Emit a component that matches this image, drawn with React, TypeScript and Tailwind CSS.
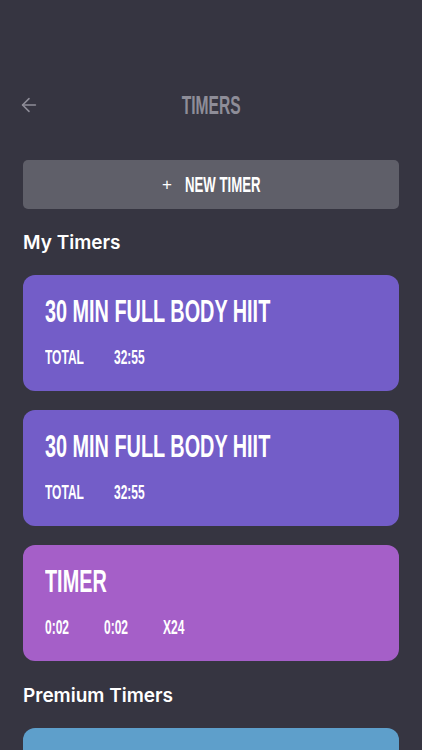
import { ArrowLeft } from 'lucide-react'

type Timer = {
  name: string
  color: string
  stats: { label: string; width: string }[]
}

const myTimers: Timer[] = [
  {
    name: '30 MIN FULL BODY HIIT',
    color: 'bg-[#735dc8]',
    stats: [
      { label: 'TOTAL', width: 'w-[69px]' },
      { label: '32:55', width: 'w-[59px]' },
    ],
  },
  {
    name: '30 MIN FULL BODY HIIT',
    color: 'bg-[#735dc8]',
    stats: [
      { label: 'TOTAL', width: 'w-[69px]' },
      { label: '32:55', width: 'w-[59px]' },
    ],
  },
  {
    name: 'TIMER',
    color: 'bg-[#a55fc8]',
    stats: [
      { label: '0:02', width: 'w-[59px]' },
      { label: '0:02', width: 'w-[59px]' },
      { label: 'X24', width: 'w-[59px]' },
    ],
  },
]

// condensed display face: bold sans squeezed horizontally
const display = "font-['Liberation_Sans',Arial,sans-serif] font-bold"

function TimerCard({ timer }: { timer: Timer }) {
  return (
    <div className={`flex h-[116px] flex-col rounded-xl px-[22px] pt-5 ${timer.color}`}>
      <div className={`${display} text-[32px] leading-none text-white`}>
        <span className="inline-block origin-left scale-x-[0.62] whitespace-nowrap">{timer.name}</span>
      </div>
      <div className={`${display} mt-5 flex text-[20px] leading-none text-white`}>
        {timer.stats.map((stat, i) => (
          <div key={i} className={`${stat.width} shrink-0`}>
            <span className="inline-block origin-left scale-x-[0.6] whitespace-nowrap">{stat.label}</span>
          </div>
        ))}
      </div>
    </div>
  )
}

export default function App() {
  return (
    <div className="h-[750px] w-full overflow-hidden bg-[#363541] font-['Inter',sans-serif]">
      <div className="grid grid-cols-[60px_1fr_60px] items-center pt-[91px]">
        <div className="pl-[18px] text-[#8e8d98]">
          <ArrowLeft size={22} strokeWidth={1.7} />
        </div>
        <div className={`${display} text-center text-[26px] leading-[28px] text-[#8e8d98]`}>
          <span className="inline-block scale-x-[0.6]">TIMERS</span>
        </div>
        <div />
      </div>

      <div className="flex flex-col px-[23px] pt-[41px]">
        <button className="flex h-[49px] items-center justify-center rounded-[5px] bg-[#5f5f69] text-white">
          <span className={`${display} flex items-center text-[22px] leading-none`}>
            <span className="inline-block w-[23px] text-left text-[17px] font-normal">+</span>
            <span className="inline-block w-[75px] origin-left scale-x-[0.6] whitespace-nowrap">NEW TIMER</span>
          </span>
        </button>

        <h2 className="mt-[22px] text-[19px] leading-6 font-semibold text-white">My Timers</h2>

        <div className="mt-[20px] flex flex-col gap-[19px]">
          {myTimers.map((t, i) => (
            <TimerCard key={i} timer={t} />
          ))}
        </div>

        <h2 className="mt-[23px] text-[19px] leading-6 font-semibold text-white">Premium Timers</h2>

        <div className="mt-[20px] h-[116px] rounded-xl bg-[#5e9fcb]" />
      </div>
    </div>
  )
}
